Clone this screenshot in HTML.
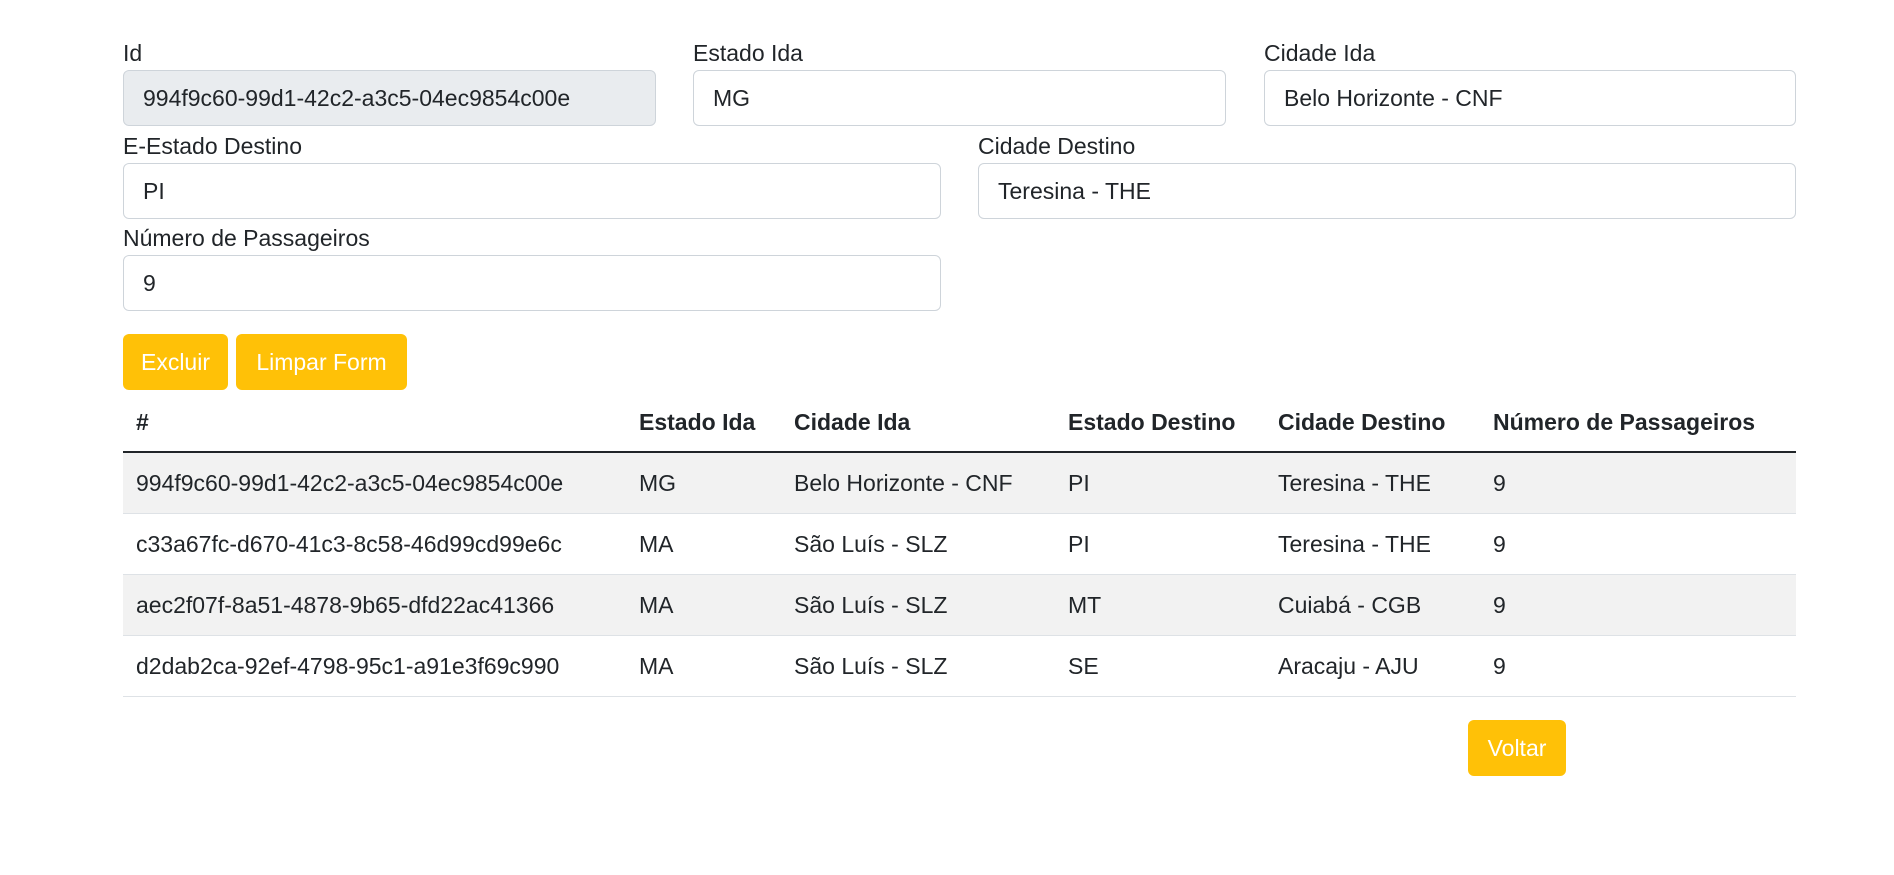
<!DOCTYPE html>
<html><head><meta charset="utf-8"><style>
*{box-sizing:border-box;margin:0;padding:0}
body{width:1894px;height:875px;background:#fff;font-family:"Liberation Sans",Arial,sans-serif;font-size:23px;color:#212529;position:relative;overflow:hidden}
.lbl{position:absolute;line-height:30px}
.inp{position:absolute;height:56px;border:1px solid #ced4da;border-radius:6px;background:#fff;padding-left:19px;line-height:54px}
.dis{background:#e9ecef}
.btn{position:absolute;background:#ffc107;color:#fff;border-radius:6px;text-align:center;line-height:56px;height:56px}
.row{position:absolute;left:123px;width:1673px;height:61px;border-bottom:1px solid #dee2e6}
.row span,.hd span{position:absolute;line-height:60px}
.hd{position:absolute;left:123px;width:1673px;top:392px;height:61px;border-bottom:2px solid #212529;font-weight:bold}
</style></head><body>
<div class="lbl" style="left:123px;top:38px">Id</div>
<div class="lbl" style="left:693px;top:38px">Estado Ida</div>
<div class="lbl" style="left:1264px;top:38px">Cidade Ida</div>
<div class="inp dis" style="left:123px;top:70px;width:533px">994f9c60-99d1-42c2-a3c5-04ec9854c00e</div>
<div class="inp" style="left:693px;top:70px;width:533px">MG</div>
<div class="inp" style="left:1264px;top:70px;width:532px">Belo Horizonte - CNF</div>
<div class="lbl" style="left:123px;top:131px">E-Estado Destino</div>
<div class="lbl" style="left:978px;top:131px">Cidade Destino</div>
<div class="inp" style="left:123px;top:163px;width:818px">PI</div>
<div class="inp" style="left:978px;top:163px;width:818px">Teresina - THE</div>
<div class="lbl" style="left:123px;top:223px">Número de Passageiros</div>
<div class="inp" style="left:123px;top:255px;width:818px">9</div>
<div class="btn" style="left:123px;top:334px;width:105px">Excluir</div>
<div class="btn" style="left:236px;top:334px;width:171px">Limpar Form</div>
<div class="hd"><span style="left:13px">#</span><span style="left:516px">Estado Ida</span><span style="left:671px">Cidade Ida</span><span style="left:945px">Estado Destino</span><span style="left:1155px">Cidade Destino</span><span style="left:1370px">Número de Passageiros</span></div>
<div class="row" style="top:453px;background:#f2f2f2"><span style="left:13px">994f9c60-99d1-42c2-a3c5-04ec9854c00e</span><span style="left:516px">MG</span><span style="left:671px">Belo Horizonte - CNF</span><span style="left:945px">PI</span><span style="left:1155px">Teresina - THE</span><span style="left:1370px">9</span></div>
<div class="row" style="top:514px"><span style="left:13px">c33a67fc-d670-41c3-8c58-46d99cd99e6c</span><span style="left:516px">MA</span><span style="left:671px">São Luís - SLZ</span><span style="left:945px">PI</span><span style="left:1155px">Teresina - THE</span><span style="left:1370px">9</span></div>
<div class="row" style="top:575px;background:#f2f2f2"><span style="left:13px">aec2f07f-8a51-4878-9b65-dfd22ac41366</span><span style="left:516px">MA</span><span style="left:671px">São Luís - SLZ</span><span style="left:945px">MT</span><span style="left:1155px">Cuiabá - CGB</span><span style="left:1370px">9</span></div>
<div class="row" style="top:636px"><span style="left:13px">d2dab2ca-92ef-4798-95c1-a91e3f69c990</span><span style="left:516px">MA</span><span style="left:671px">São Luís - SLZ</span><span style="left:945px">SE</span><span style="left:1155px">Aracaju - AJU</span><span style="left:1370px">9</span></div>
<div class="btn" style="left:1468px;top:720px;width:98px">Voltar</div>
</body></html>
